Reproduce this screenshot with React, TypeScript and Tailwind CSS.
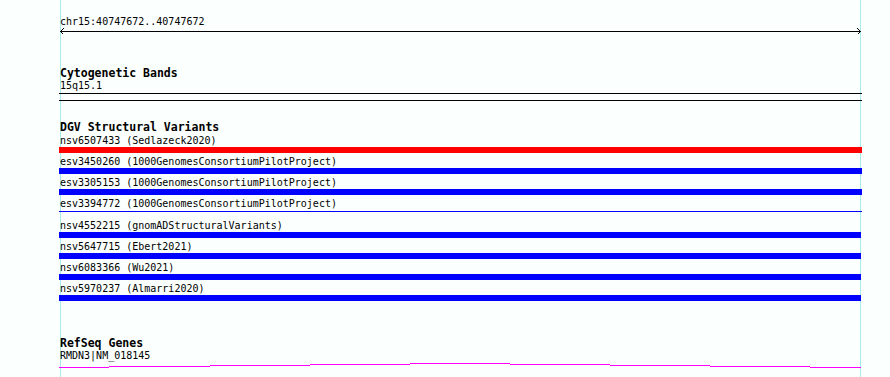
import React from 'react';

interface Variant {
  label: string;
  color: 'red' | 'blue';
  thin?: boolean;
  short?: boolean;
}

const variants: Variant[] = [
  { label: 'nsv6507433 (Sedlazeck2020)', color: 'red' },
  { label: 'esv3450260 (1000GenomesConsortiumPilotProject)', color: 'blue' },
  { label: 'esv3305153 (1000GenomesConsortiumPilotProject)', color: 'blue' },
  { label: 'esv3394772 (1000GenomesConsortiumPilotProject)', color: 'blue', thin: true },
  { label: 'nsv4552215 (gnomADStructuralVariants)', color: 'blue', short: true },
  { label: 'nsv5647715 (Ebert2021)', color: 'blue', short: true },
  { label: 'nsv6083366 (Wu2021)', color: 'blue', short: true },
  { label: 'nsv5970237 (Almarri2020)', color: 'blue', short: true },
];

// gene line steps: [x1, x2, row] relative to the track (x starts at 59)
const geneSteps: [number, number, number][] = [
  [0, 50, 5],
  [50, 151, 4],
  [151, 251, 3],
  [251, 351, 2],
  [351, 451, 1],
  [451, 551, 2],
  [551, 651, 3],
  [651, 751, 4],
  [751, 802, 5],
];

const TrackTitle: React.FC<{ children: React.ReactNode; className?: string }> = ({ children, className }) => (
  <div className={`pl-px font-bold text-[11.5px] leading-[13px] text-black ${className ?? ''}`}>{children}</div>
);

const Label: React.FC<{ children: React.ReactNode; className?: string }> = ({ children, className }) => (
  <div className={`pl-px text-[10px] leading-[12px] text-black whitespace-pre ${className ?? ''}`}>{children}</div>
);

const App: React.FC = () => {
  return (
    <div className="relative w-[890px] h-[377px] overflow-hidden bg-[#fbfffd] font-['DejaVu_Sans_Mono',monospace]">
      {/* view edges */}
      <div className="absolute left-[60px] top-0 h-full w-px bg-[#a6ecef]" />
      <div className="absolute left-[860px] top-0 h-full w-px bg-[#a6ecef]" />

      <div className="relative pl-[59px] pt-[15px]">
        <div className="flex w-[803px] flex-col">
          {/* ruler */}
          <Label className="leading-[13px]">chr15:40747672..40747672</Label>
          <svg width="803" height="7" shapeRendering="crispEdges" className="block">
            <rect x="1" y="3" width="801" height="1" fill="#000" />
            <polyline points="4.5,0.5 1.5,3.5 4.5,6.5" fill="none" stroke="#000" strokeWidth="1" />
            <polyline points="798.5,0.5 801.5,3.5 798.5,6.5" fill="none" stroke="#000" strokeWidth="1" />
          </svg>

          {/* cytobands */}
          <TrackTitle className="mt-[32px]">Cytogenetic Bands</TrackTitle>
          <Label>15q15.1</Label>
          <div className="mt-[1px] h-px w-full bg-black" />
          <div className="mt-[6px] h-px w-full bg-black" />

          {/* DGV */}
          <TrackTitle className="mt-[20px]">DGV Structural Variants</TrackTitle>
          {variants.map((v, i) => (
            <div key={v.label} className={i === 0 ? 'mt-[1px]' : 'mt-[3px]'}>
              <Label>{v.label}</Label>
              <div className={`h-[6px] ${v.short ? 'w-[802px]' : 'w-full'}`}>
                <div
                  className={`${v.thin ? 'mt-[1px] h-px' : 'h-[6px]'} w-full ${
                    v.color === 'red' ? 'bg-[#ff0000]' : 'bg-[#0000ff]'
                  }`}
                />
              </div>
            </div>
          ))}

          {/* RefSeq */}
          <TrackTitle className="mt-[36px]">RefSeq Genes</TrackTitle>
          <Label>RMDN3|NM_018145</Label>
          <svg width="803" height="7" className="block">
            {geneSteps.map(([x1, x2, y], i) => (
              <rect key={i} x={x1} y={y} width={x2 - x1} height="1" fill="#ff00ff" />
            ))}
          </svg>
        </div>
      </div>
    </div>
  );
};

export default App;
